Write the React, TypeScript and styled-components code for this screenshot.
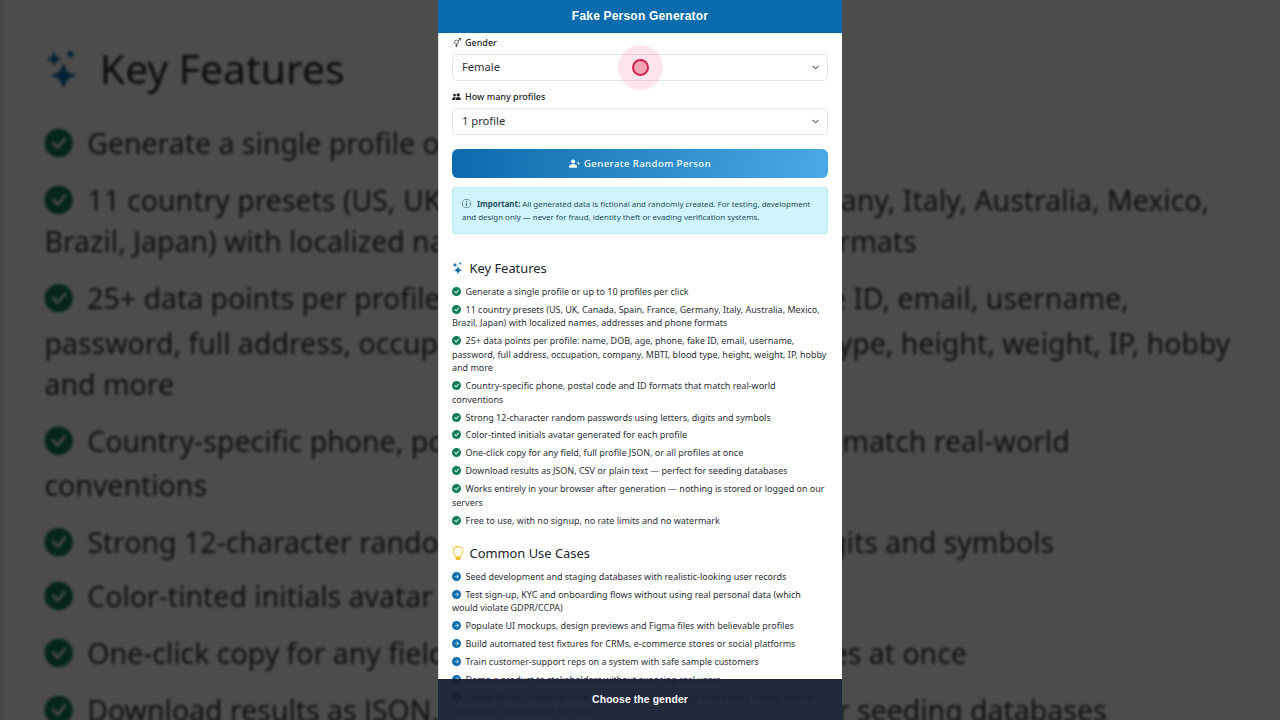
import styled, { createGlobalStyle } from "styled-components";
import {
  BsArrowRightCircleFill,
  BsCheckCircleFill,
  BsChevronDown,
  BsGenderAmbiguous,
  BsInfoCircle,
  BsLightbulb,
  BsPeopleFill,
  BsPersonPlusFill,
  BsStars,
} from "react-icons/bs";

const features = [
  "Generate a single profile or up to 10 profiles per click",
  "11 country presets (US, UK, Canada, Spain, France, Germany, Italy, Australia, Mexico, Brazil, Japan) with localized names, addresses and phone formats",
  "25+ data points per profile: name, DOB, age, phone, fake ID, email, username, password, full address, occupation, company, MBTI, blood type, height, weight, IP, hobby and more",
  "Country-specific phone, postal code and ID formats that match real-world conventions",
  "Strong 12-character random passwords using letters, digits and symbols",
  "Color-tinted initials avatar generated for each profile",
  "One-click copy for any field, full profile JSON, or all profiles at once",
  "Download results as JSON, CSV or plain text — perfect for seeding databases",
  "Works entirely in your browser after generation — nothing is stored or logged on our servers",
  "Free to use, with no signup, no rate limits and no watermark",
];

const useCases = [
  "Seed development and staging databases with realistic-looking user records",
  "Test sign-up, KYC and onboarding flows without using real personal data (which would violate GDPR/CCPA)",
  "Populate UI mockups, design previews and Figma files with believable profiles",
  "Build automated test fixtures for CRMs, e-commerce stores or social platforms",
  "Train customer-support reps on a system with safe sample customers",
  "Demo a product to stakeholders without exposing real users",
  "Create QA test cases for form validation, including edge cases (long names, special characters, international formats)",
];

const GlobalStyle = createGlobalStyle`
  html, body {
    margin: 0;
    padding: 0;
    background: #4d4d4d;
  }
`;

const Stage = styled.div`
  position: relative;
  width: 1280px;
  height: 720px;
  overflow: hidden;
  display: flex;
  justify-content: center;
  background: #4d4d4d;
`;

const Backdrop = styled.div`
  position: absolute;
  inset: 0;
  display: flex;
  justify-content: center;
  filter: blur(1.5px) brightness(0.3);
`;

const Panel = styled.div<{ $scale?: number }>`
  position: relative;
  flex: none;
  width: 404px;
  height: 720px;
  overflow: hidden;
  background: #fff;
  box-shadow: inset 1px 0 0 #dcdcdc;
  font-family: "Noto Sans", sans-serif;
  color: #212529;
  transform: ${(p) => (p.$scale ? `scale(${p.$scale})` : "none")};
  transform-origin: center;
`;

const Header = styled.header`
  box-sizing: border-box;
  height: 33px;
  padding-bottom: 1px;
  display: flex;
  align-items: center;
  justify-content: center;
  background: #0a6cad;
  color: #fff;
  font-family: "Liberation Sans", Arial, sans-serif;
  font-size: 12px;
  font-weight: 700;
  letter-spacing: 0.2px;
`;

const Body = styled.div`
  padding: 3px 14px 0;
`;

const FieldLabel = styled.div`
  height: 13px;
  display: flex;
  align-items: center;
  gap: 4px;
  font-size: 9px;
  font-weight: 500;
  margin-bottom: 5px;
  svg {
    width: 9px;
    height: 9px;
  }
`;

const Select = styled.div`
  box-sizing: border-box;
  height: 27px;
  display: flex;
  align-items: center;
  justify-content: space-between;
  padding: 0 8px 2px 9px;
  margin-bottom: 9px;
  border: 1px solid #e3e6ea;
  border-radius: 5px;
  font-size: 11.2px;
  color: #2b3035;
  svg {
    width: 7px;
    height: 7px;
    stroke-width: 1px;
    margin-top: 2px;
  }
`;

const GenerateButton = styled.div`
  height: 29px;
  margin-top: 14px;
  display: flex;
  align-items: center;
  justify-content: center;
  gap: 4px;
  border-radius: 6px;
  background: linear-gradient(100deg, #0a6aab, #4aaae8);
  color: #fff;
  font-size: 9.6px;
  font-weight: 500;
  letter-spacing: 0.42px;
  svg {
    width: 11px;
    height: 11px;
  }
`;

const Notice = styled.div`
  box-sizing: border-box;
  height: 47px;
  margin-top: 9px;
  padding: 10px 9px 0;
  background: #cff4fc;
  border: 1px solid #b6effb;
  border-radius: 3px;
  color: #1f4f5c;
  font-size: 7.9px;
  line-height: 13px;
  svg {
    width: 9px;
    height: 9px;
    margin-right: 6px;
    vertical-align: -1px;
  }
  strong {
    font-weight: 700;
  }
`;

const SectionTitle = styled.h2<{ $top: number }>`
  height: 20px;
  margin: ${(p) => p.$top}px 0 7px;
  display: flex;
  align-items: center;
  gap: 5.5px;
  font-size: 12.9px;
  font-weight: 400;
  color: #212529;
`;

const TitleIcon = styled.span<{ $color: string; $size: number }>`
  display: flex;
  justify-content: center;
  width: 12px;
  color: ${(p) => p.$color};
  svg {
    flex: none;
    width: ${(p) => p.$size}px;
    height: ${(p) => p.$size}px;
  }
`;

const List = styled.ul`
  list-style: none;
  margin: 0;
  padding: 0;
`;

const Item = styled.li`
  font-size: 8.99px;
  line-height: 13.5px;
  margin-bottom: 4.4px;
  color: #2b3035;
`;

const Bullet = styled.span<{ $color: string }>`
  color: ${(p) => p.$color};
  margin-right: 4.5px;
  svg {
    width: 9px;
    height: 9px;
    vertical-align: -1px;
  }
`;

const Caption = styled.div`
  position: absolute;
  left: 0;
  right: 0;
  bottom: 0;
  height: 41px;
  padding-bottom: 1px;
  box-sizing: border-box;
  display: flex;
  align-items: center;
  justify-content: center;
  background: rgba(24, 32, 50, 0.96);
  color: #fff;
  font-family: "Liberation Sans", Arial, sans-serif;
  font-size: 10.4px;
  font-weight: 700;
  letter-spacing: 0.1px;
`;

const CursorHalo = styled.div`
  position: absolute;
  left: 180px;
  top: 45px;
  width: 45px;
  height: 45px;
  display: flex;
  align-items: center;
  justify-content: center;
  border-radius: 50%;
  background: rgba(240, 80, 120, 0.15);
`;

const CursorDot = styled.div`
  box-sizing: border-box;
  width: 17px;
  height: 17px;
  border-radius: 50%;
  border: 2px solid #cf2150;
  background: #f7a3b6;
`;

function Sheet() {
  return (
    <>
      <Header>Fake Person Generator</Header>
      <Body>
        <FieldLabel>
          <BsGenderAmbiguous /> Gender
        </FieldLabel>
        <Select>
          Female <BsChevronDown />
        </Select>
        <FieldLabel>
          <BsPeopleFill /> How many profiles
        </FieldLabel>
        <Select>
          1 profile <BsChevronDown />
        </Select>
        <GenerateButton>
          <BsPersonPlusFill /> Generate Random Person
        </GenerateButton>
        <Notice>
          <BsInfoCircle />
          <strong>Important:</strong> All generated data is fictional and randomly created. For testing,
          development and design only — never for fraud, identity theft or evading verification systems.
        </Notice>
        <SectionTitle $top={24}>
          <TitleIcon $color="#0a6cad" $size={12}>
            <BsStars />
          </TitleIcon>
          Key Features
        </SectionTitle>
        <List>
          {features.map((text) => (
            <Item key={text}>
              <Bullet $color="#0f7d52">
                <BsCheckCircleFill />
              </Bullet>
              {text}
            </Item>
          ))}
        </List>
        <SectionTitle $top={16}>
          <TitleIcon $color="#f5bd1f" $size={14}>
            <BsLightbulb />
          </TitleIcon>
          Common Use Cases
        </SectionTitle>
        <List>
          {useCases.map((text) => (
            <Item key={text}>
              <Bullet $color="#0a6cad">
                <BsArrowRightCircleFill />
              </Bullet>
              {text}
            </Item>
          ))}
        </List>
      </Body>
    </>
  );
}

export default function App() {
  return (
    <Stage>
      <GlobalStyle />
      <Backdrop aria-hidden="true">
        <Panel $scale={3.168}>
          <Sheet />
        </Panel>
      </Backdrop>
      <Panel>
        <Sheet />
        <CursorHalo>
          <CursorDot />
        </CursorHalo>
        <Caption>Choose the gender</Caption>
      </Panel>
    </Stage>
  );
}
